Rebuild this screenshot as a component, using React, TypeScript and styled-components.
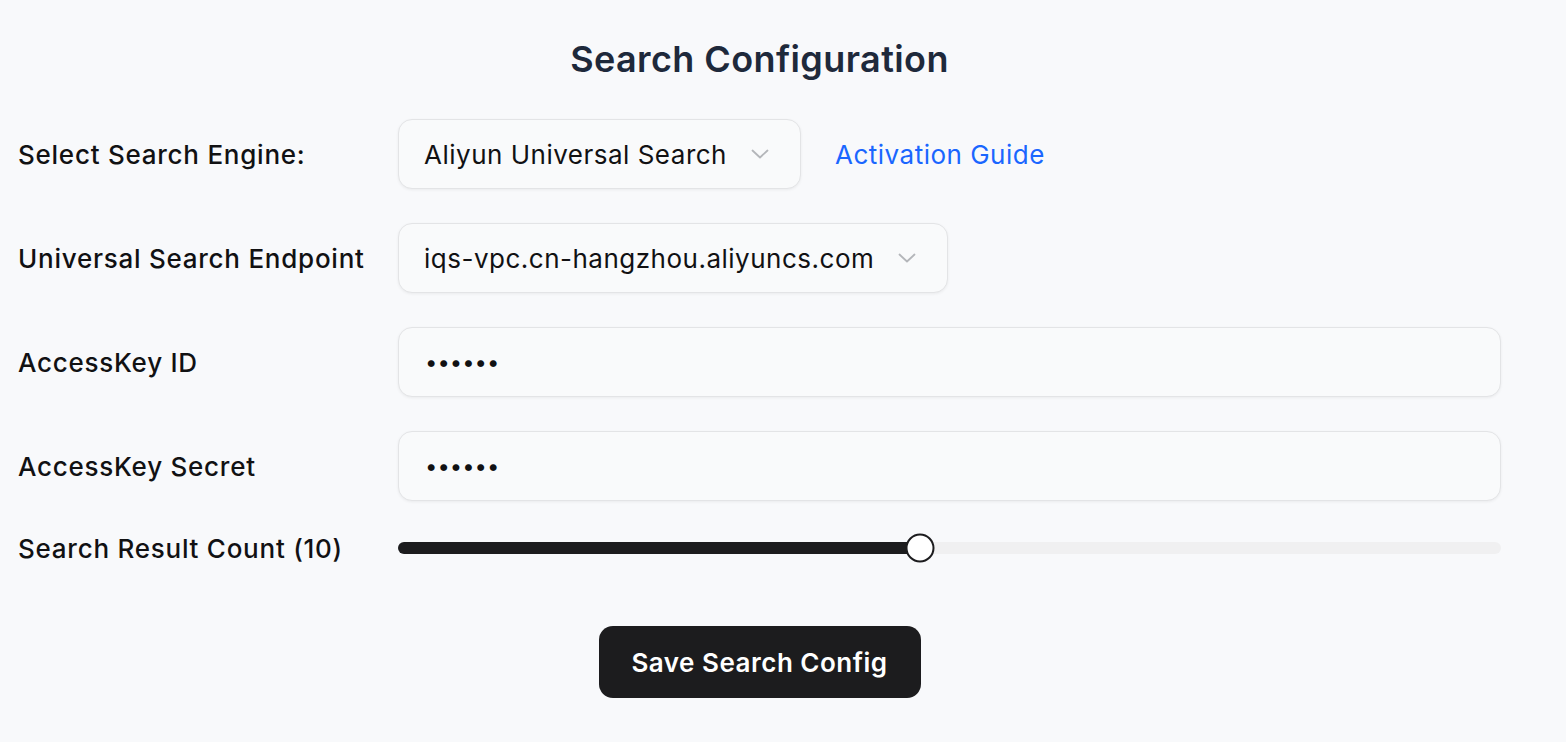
import React from 'react';
import styled, { createGlobalStyle } from 'styled-components';

const GlobalStyle = createGlobalStyle`
  html, body {
    margin: 0;
    padding: 0;
    background: #f8f9fb;
    font-family: Inter, "Noto Sans", "Liberation Sans", sans-serif;
    color: #111113;
  }
`;

const MIN = 1;
const MAX = 20;
const COUNT = 10;

function Chevron() {
  return (
    <svg width="18" height="10" viewBox="0 0 18 10" fill="none">
      <path d="M1.5 1.5L9 8.5L16.5 1.5" stroke="#b4b6ba" strokeWidth="1.8" strokeLinecap="round" strokeLinejoin="round" />
    </svg>
  );
}

function App() {
  const pct = ((COUNT - MIN) / (MAX - MIN)) * 100;

  return (
    <Page>
      <GlobalStyle />
      <Title>Search Configuration</Title>

      <Form>
        <Row>
          <Label>Select Search Engine:</Label>
          <Select>
            <span>Aliyun Universal Search</span>
            <Chevron />
          </Select>
          <GuideLink href="#">Activation Guide</GuideLink>
        </Row>

        <Row>
          <Label>Universal Search Endpoint</Label>
          <Select>
            <span>iqs-vpc.cn-hangzhou.aliyuncs.com</span>
            <Chevron />
          </Select>
        </Row>

        <Row>
          <Label>AccessKey ID</Label>
          <Input type="password" value="123456" readOnly />
        </Row>

        <Row>
          <Label>AccessKey Secret</Label>
          <Input type="password" value="123456" readOnly />
        </Row>

        <SliderRow>
          <Label>Search Result Count ({COUNT})</Label>
          <Track>
            <Fill style={{ width: `${pct}%` }} />
            <Thumb style={{ left: `${pct}%` }} />
          </Track>
        </SliderRow>
      </Form>

      <Footer>
        <SaveButton>Save Search Config</SaveButton>
      </Footer>
    </Page>
  );
}

export default App;

const Page = styled.div`
  width: 1483px;
  padding: 35px 65px 44px 18px;
  box-sizing: content-box;
`;

const Title = styled.h1`
  margin: 0 0 36px;
  text-align: center;
  font-size: 36px;
  font-weight: 600;
  line-height: 48px;
  color: #1e293b;
  letter-spacing: 0.4px;
`;

const Form = styled.div`
  display: flex;
  flex-direction: column;
  gap: 34px;
`;

const Row = styled.div`
  display: flex;
  align-items: center;
  height: 70px;
`;

const SliderRow = styled.div`
  display: flex;
  align-items: center;
  height: 26px;
`;

const Label = styled.label`
  width: 380px;
  flex: 0 0 380px;
  font-size: 26px;
  font-weight: 500;
  letter-spacing: 0.75px;
  color: #111113;
`;

const Select = styled.div`
  display: flex;
  align-items: center;
  gap: 24px;
  height: 70px;
  box-sizing: border-box;
  padding: 0 31px 0 25px;
  border: 1.5px solid #e3e4e6;
  border-radius: 14px;
  background: #f9fafb;
  box-shadow: 0 1px 3px rgba(0, 0, 0, 0.06);
  font-size: 26px;
  letter-spacing: 0.5px;
  color: #111113;
`;

const GuideLink = styled.a`
  margin-left: 34px;
  font-size: 26px;
  letter-spacing: 0.5px;
  color: #1a66ff;
  text-decoration: none;
`;

const Input = styled.input`
  flex: 1;
  height: 70px;
  box-sizing: border-box;
  padding: 0 26px;
  border: 1.5px solid #e3e4e6;
  border-radius: 14px;
  background: #f9fafb;
  box-shadow: 0 1px 3px rgba(0, 0, 0, 0.06);
  font-family: Inter, "Noto Sans", sans-serif;
  font-size: 22px;
  color: #111113;
  outline: none;
`;

const Track = styled.div`
  position: relative;
  flex: 1;
  height: 12px;
  border-radius: 6px;
  background: #f0f0f1;
`;

const Fill = styled.div`
  height: 100%;
  border-radius: 6px;
  background: #1c1c1e;
`;

const Thumb = styled.div`
  position: absolute;
  top: 50%;
  width: 29px;
  height: 29px;
  box-sizing: border-box;
  border: 2px solid #1c1c1e;
  border-radius: 50%;
  background: #ffffff;
  transform: translate(-50%, -50%);
`;

const Footer = styled.div`
  display: flex;
  justify-content: center;
  margin-top: 65px;
`;

const SaveButton = styled.button`
  width: 322px;
  height: 72px;
  border: none;
  border-radius: 14px;
  background: #1c1c1e;
  color: #ffffff;
  font-family: Inter, "Noto Sans", sans-serif;
  font-size: 26px;
  font-weight: 600;
  letter-spacing: 0.5px;
  cursor: pointer;
`;
